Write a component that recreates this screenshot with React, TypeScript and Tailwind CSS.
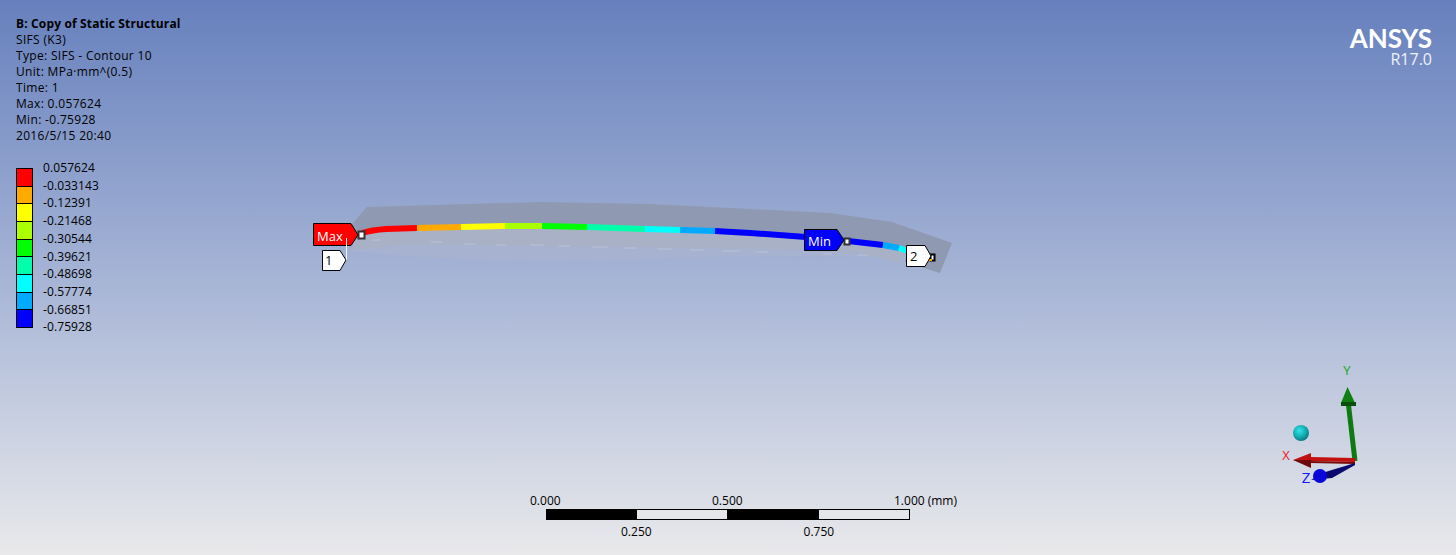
const FONT = "font-['Open_Sans','Noto_Sans',sans-serif]";

const infoLines = [
  "SIFS (K3)",
  "Type: SIFS - Contour 10",
  "Unit: MPa·mm^(0.5)",
  "Time: 1",
  "Max: 0.057624",
  "Min: -0.75928",
  "2016/5/15 20:40",
];

const legend = [
  { label: "0.057624", color: "bg-[#ff0000]" },
  { label: "-0.033143", color: "bg-[#ffaa00]" },
  { label: "-0.12391", color: "bg-[#ffff00]" },
  { label: "-0.21468", color: "bg-[#aaff00]" },
  { label: "-0.30544", color: "bg-[#00ff00]" },
  { label: "-0.39621", color: "bg-[#00ffaa]" },
  { label: "-0.48698", color: "bg-[#00ffff]" },
  { label: "-0.57774", color: "bg-[#00aaff]" },
  { label: "-0.66851", color: "bg-[#0000ff]" },
];

// colored result line along the crack front, page coordinates
const segments = [
  { color: "#ff0000", d: "M362 233 Q372 230 386 229 L417 228" },
  { color: "#ffaa00", d: "M417 228 L461 227" },
  { color: "#ffff00", d: "M461 227 L505 226" },
  { color: "#aaff00", d: "M505 226 L542 226" },
  { color: "#00ff00", d: "M542 226 L587 227" },
  { color: "#00ffaa", d: "M587 227 L645 229" },
  { color: "#00ffff", d: "M645 229 L680 230" },
  { color: "#00aaff", d: "M680 230 L715 231" },
  { color: "#0000ff", d: "M715 231 L750 233 L806 237 M848 241 L883 245" },
  { color: "#00aaff", d: "M883 245 L899 248" },
  { color: "#00ffff", d: "M899 248 L908 251" },
];

function Model() {
  return (
    <svg className="absolute left-0 top-0" width="1456" height="555" viewBox="0 0 1456 555" aria-hidden="true">
      {/* faint lower face */}
      <path d="M346 250 Q450 264 640 259 Q800 254 880 257 L940 273 L905 262 L800 245 L640 240 L400 240 Z" fill="#a9b3cf" opacity="0.75" />
      {/* mid face */}
      <path d="M356 238 Q380 230 420 229 L600 229 L760 235 L850 243 L905 251 L900 263 L860 253 L800 250 L640 247 L540 246 L400 245 L352 250 Z" fill="#a9b1c6" />
      {/* upper face */}
      <path d="M352 224 L367 207 L540 202 L650 204 L750 209 L830 213 L892 222 L952 243 L940 273 L905 262 L908 250 L850 241 L760 233 L600 227 L420 227 Q380 228 356 238 Z" fill="#8f99b2" />

      <g stroke="#b9c1d6" strokeWidth="1">
        <path d="M372 240 L380 240 M431 242 L442 242 M464 244 L476 244 M496 245 L506 245 M530 245 L544 245 M559 246 L570 246 M592 247 L608 247 M624 248 L636 248 M657 249 L672 249 M690 250 L704 250 M723 251 L740 251 M756 252 L768 252 M823 254 L832 254 M857 255 L868 255" />
      </g>

      {segments.map((s) => (
        <path key={s.d} d={s.d} fill="none" stroke={s.color} strokeWidth="6" />
      ))}

      {/* Max callout */}
      <rect x="358.500" y="231.500" width="6" height="7" fill="#fff" stroke="#333" strokeWidth="2" />
      <path d="M313.500 223.500 H351 L358 235 L351 245.500 H313.500 Z" fill="#ff0000" stroke="#000" />
      <text x="317" y="241" fontSize="13" fill="#fff" fontFamily="Open Sans, sans-serif">Max</text>
      <path d="M322.500 250.500 H340 L346 260 L340 270.500 H322.500 Z" fill="#fff" stroke="#000" />
      <text x="325" y="265" fontSize="13" fill="#000" fontFamily="Open Sans, sans-serif">1</text>
      <path d="M346.500 238 V260" stroke="#f4f4f4" strokeWidth="1" />

      {/* Min callout */}
      <rect x="844.500" y="238.500" width="5" height="6" fill="#fff" stroke="#333" strokeWidth="2" />
      <path d="M804.500 229.500 H837 L844 240 L837 250.500 H804.500 Z" fill="#0000ff" stroke="#000" />
      <text x="808" y="246" fontSize="13" fill="#fff" fontFamily="Open Sans, sans-serif">Min</text>

      {/* node 2 callout */}
      <rect x="930.500" y="254.500" width="4" height="6" fill="#fff" stroke="#000" strokeWidth="2" />
      <path d="M929 260 L932 260" stroke="#ffaa00" strokeWidth="2" />
      <path d="M906.500 245.500 H925 L931 256 L925 266.500 H906.500 Z" fill="#fff" stroke="#000" />
      <text x="910" y="261" fontSize="13" fill="#000" fontFamily="Open Sans, sans-serif">2</text>
    </svg>
  );
}

function Triad() {
  return (
    <svg className="absolute left-[1270px] top-[360px]" width="110" height="130" viewBox="0 0 110 130" aria-hidden="true">
      <defs>
        <radialGradient id="ball" cx="40%" cy="35%" r="70%">
          <stop offset="0" stopColor="#2fe6ea" />
          <stop offset="0.6" stopColor="#14a8ae" />
          <stop offset="1" stopColor="#0b6f78" />
        </radialGradient>
      </defs>
      <circle cx="31" cy="73" r="8" fill="url(#ball)" />

      {/* y axis */}
      <path d="M85 101 L78.500 45" stroke="#0f7a12" strokeWidth="5" fill="none" />
      <path d="M77.500 27 L85 43 L71 43 Z" fill="#0f7f12" />
      <path d="M71 42 H86 V46 H71 Z" fill="#0a4d0c" />
      <text x="77" y="15" fontSize="13" textAnchor="middle" fill="#16a516" fontFamily="Open Sans, sans-serif">Y</text>

      {/* x axis */}
      <path d="M85 100 L40 99" stroke="#c40f0f" strokeWidth="4" fill="none" />
      <path d="M85 103 L40 102" stroke="#7a0a0a" strokeWidth="2" fill="none" />
      <path d="M23 100 L41 93 V101 Z" fill="#c01010" />
      <path d="M23 100 L41 100 V108 Z" fill="#6f0a0a" />
      <text x="16" y="100" fontSize="13" textAnchor="middle" fill="#f01818" fontFamily="Open Sans, sans-serif">X</text>

      {/* z axis */}
      <path d="M85 103 L52 113 L41 120 L62 118 L85 105 Z" fill="#0a0a6e" />
      <circle cx="50" cy="116" r="7" fill="#0808d8" />
      <text x="36" y="123" fontSize="15" textAnchor="middle" fill="#1414ff" fontFamily="Open Sans, sans-serif">Z</text>
    </svg>
  );
}

export default function App() {
  return (
    <div className={`relative h-[555px] w-full overflow-hidden bg-linear-to-b from-[#6780bd] to-[#e9e9eb] text-[12px] leading-[16px] text-black ${FONT}`}>
      <Model />
      <Triad />

      <div className="relative flex flex-col pl-4 pt-4">
        <div className="font-bold tracking-[0.15px]">B: Copy of Static Structural</div>
        {infoLines.map((line) => (
          <div key={line} className="tracking-[0.32px]">{line}</div>
        ))}

        <div className="mt-[23px] flex gap-[10px]">
          <div className="mt-px flex h-[160px] w-[17px] flex-col border border-black">
            {legend.map((item) => (
              <div key={item.label} className={`flex-1 border-b border-black last:border-b-0 ${item.color}`} />
            ))}
          </div>
          <div className="-mt-2 flex flex-col tracking-[0.1px]">
            {legend.map((item) => (
              <div key={item.label} className="h-[17.720px] leading-[17.720px]">{item.label}</div>
            ))}
            <div className="h-[17.720px] leading-[17.720px]">-0.75928</div>
          </div>
        </div>
      </div>

      <div className="absolute right-6 top-[24px] flex flex-col items-end text-white">
        <div className="font-['Lato',sans-serif] text-[26px] font-bold leading-[28px]">ANSYS</div>
        <div className="text-[16px] leading-[14px] text-[#eef1f8]">R17.0</div>
      </div>

      <div className="absolute left-[546px] top-[493px] w-[364px]">
        <div className="grid grid-cols-[182px_182px_0px] whitespace-nowrap">
          <div className="-ml-4">0.000</div>
          <div className="-ml-4">0.500</div>
          <div className="-ml-[16px]">1.000 (mm)</div>
        </div>
        <div className="flex h-[11px] border border-black">
          <div className="w-[90px] bg-black" />
          <div className="w-[90px] bg-[#e4e6ea]" />
          <div className="w-[92px] bg-black" />
          <div className="flex-1 bg-[#e4e6ea]" />
        </div>
        <div className="mt-1 flex gap-[152px] pl-[75px]">
          <div>0.250</div>
          <div>0.750</div>
        </div>
      </div>
    </div>
  );
}
